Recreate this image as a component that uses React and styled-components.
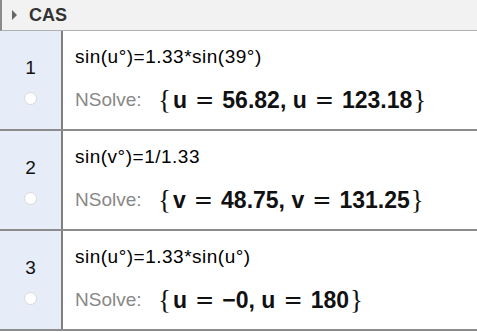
import React from "react";
import styled, { createGlobalStyle } from "styled-components";

const GlobalStyle = createGlobalStyle`
  body {
    margin: 0;
    background: #ffffff;
    font-family: "Liberation Sans", Arial, sans-serif;
  }
`;

const rows = [
  { n: 1, input: "sin(u°)=1.33*sin(39°)", v: "u", a: "56.82", b: "123.18" },
  { n: 2, input: "sin(v°)=1/1.33", v: "v", a: "48.75", b: "131.25" },
  { n: 3, input: "sin(u°)=1.33*sin(u°)", v: "u", a: "−0", b: "180" },
];

const Panel = styled.div`
  width: 477px;
  height: 332px;
  display: flex;
  flex-direction: column;
  overflow: hidden;
  background: #fff;
`;

const Header = styled.div`
  height: 31px;
  box-sizing: border-box;
  display: flex;
  align-items: center;
  gap: 12px;
  padding-left: 10px;
  background: #f2f2f2;
  border-left: 2px solid #8a8a8a;
  border-bottom: 1px solid #b0b0b0;
`;

const Arrow = styled.span`
  width: 0;
  height: 0;
  border-top: 5px solid transparent;
  border-bottom: 5px solid transparent;
  border-left: 5px solid #666;
`;

const Title = styled.span`
  font-size: 18px;
  font-weight: bold;
  color: #333;
`;

const Row = styled.div`
  display: flex;
  height: 100px;
  box-sizing: border-box;
  border-bottom: 2px solid #8c8c8c;
`;

const Gutter = styled.div`
  width: 63px;
  flex-shrink: 0;
  background: #e6edf8;
  border-right: 2px solid #808080;
  display: flex;
  flex-direction: column;
  align-items: center;
  padding-top: 27px;
  box-sizing: border-box;
  gap: 14px;
`;

const Num = styled.span`
  font-size: 19px;
  color: #111;
  line-height: 20px;
`;

const Dot = styled.span`
  width: 11px;
  height: 11px;
  border-radius: 50%;
  background: #fff;
  border: 1px solid #d8d8d8;
`;

const Body = styled.div`
  flex: 1;
  padding: 15px 0 0 12px;
  display: flex;
  flex-direction: column;
  gap: 16px;
`;

const Input = styled.div`
  font-size: 19px;
  letter-spacing: 0.5px;
  color: #000;
  line-height: 22px;
`;

const Output = styled.div`
  display: flex;
  align-items: center;
  height: 32px;
`;

const Label = styled.span`
  font-size: 19px;
  color: #888;
  width: 83px;
`;

const Math = styled.span`
  font-family: "Liberation Sans", Arial, sans-serif;
  font-weight: bold;
  font-size: 23px;
  color: #111;
  display: flex;
  align-items: center;
`;

const Brace = styled.span`
  font-family: "Liberation Serif", serif;
  font-weight: normal;
  font-size: 27px;
  margin: ${(p) => (p.$open ? "0 2px 0 0" : "0 0 0 1px")};
`;

const Eq = styled.span`
  font-family: "DejaVu Sans", sans-serif;
  font-weight: normal;
  font-size: 23px;
  padding: 0 8px;
`;

const Solution = ({ v, a, b }) => (
  <Math>
    <Brace $open>{"{"}</Brace>
    {v}
    <Eq>=</Eq>
    {a},&nbsp;{v}
    <Eq>=</Eq>
    {b}
    <Brace>{"}"}</Brace>
  </Math>
);

export default function App() {
  return (
    <>
      <GlobalStyle />
      <Panel>
        <Header>
          <Arrow />
          <Title>CAS</Title>
        </Header>
        {rows.map((r) => (
          <Row key={r.n}>
            <Gutter>
              <Num>{r.n}</Num>
              <Dot />
            </Gutter>
            <Body>
              <Input>{r.input}</Input>
              <Output>
                <Label>NSolve:</Label>
                <Solution v={r.v} a={r.a} b={r.b} />
              </Output>
            </Body>
          </Row>
        ))}
      </Panel>
    </>
  );
}
